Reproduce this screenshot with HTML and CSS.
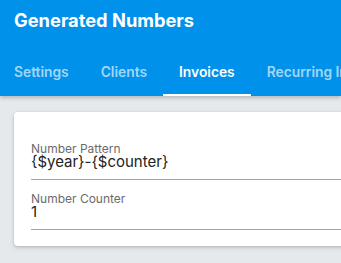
FILE: index.html
```html
<!DOCTYPE html>
<html>
<head>
<meta charset="utf-8">
<link rel="stylesheet" href="styles.css">
</head>
<body>
<header class="appbar">
  <div class="title">Generated Numbers</div>
  <nav class="tabs">
    <div class="tab">Settings</div>
    <div class="tab">Clients</div>
    <div class="tab active">Invoices</div>
    <div class="tab">Recurring Invoices</div>
  </nav>
</header>
<main class="content">
  <section class="card">
    <div class="field">
      <div class="label">Number Pattern</div>
      <div class="value">{$year}-{$counter}</div>
    </div>
    <div class="field">
      <div class="label">Number Counter</div>
      <div class="value">1</div>
    </div>
  </section>
</main>
</body>
</html>
```
FILE: styles.css
```css
html, body {
  margin: 0;
  padding: 0;
}
body {
  width: 341px;
  height: 263px;
  overflow: hidden;
  background: #e6e9ec;
  font-family: Inter, "Noto Sans", sans-serif;
}
.appbar {
  background: #0091ea;
  color: #fff;
  box-shadow: 0 2px 4px rgba(0, 0, 0, 0.22);
  position: relative;
  z-index: 1;
}
.title {
  height: 48px;
  box-sizing: border-box;
  padding-left: 14px;
  font-size: 18.3px;
  font-weight: 700;
  line-height: 40px;
  white-space: nowrap;
}
.tabs {
  display: flex;
  height: 48px;
  white-space: nowrap;
  overflow: hidden;
}
.tab {
  padding: 0 16px;
  font-size: 13.8px;
  font-weight: 600;
  line-height: 48px;
  color: rgba(255, 255, 255, 0.65);
  box-sizing: border-box;
  flex-shrink: 0;
}
.tab:first-child {
  padding-left: 14px;
}
.tab.active {
  color: #fff;
  box-shadow: inset 0 -2px 0 #fff;
}
.content {
  padding: 16px 0 0 14px;
}
.card {
  width: 420px;
  background: #fff;
  border-radius: 4px;
  box-shadow: 0 1px 3px rgba(0, 0, 0, 0.18), 0 2px 6px rgba(0, 0, 0, 0.08);
  padding: 18px 0 16px 17px;
  box-sizing: border-box;
}
.field {
  padding: 13px 0 10px;
  border-bottom: 1px solid #a3a3a3;
}
.label {
  font-size: 12px;
  line-height: 12px;
  color: #6b6b6b;
}
.value {
  font-size: 15px;
  line-height: 14px;
  color: #222;
}
```
